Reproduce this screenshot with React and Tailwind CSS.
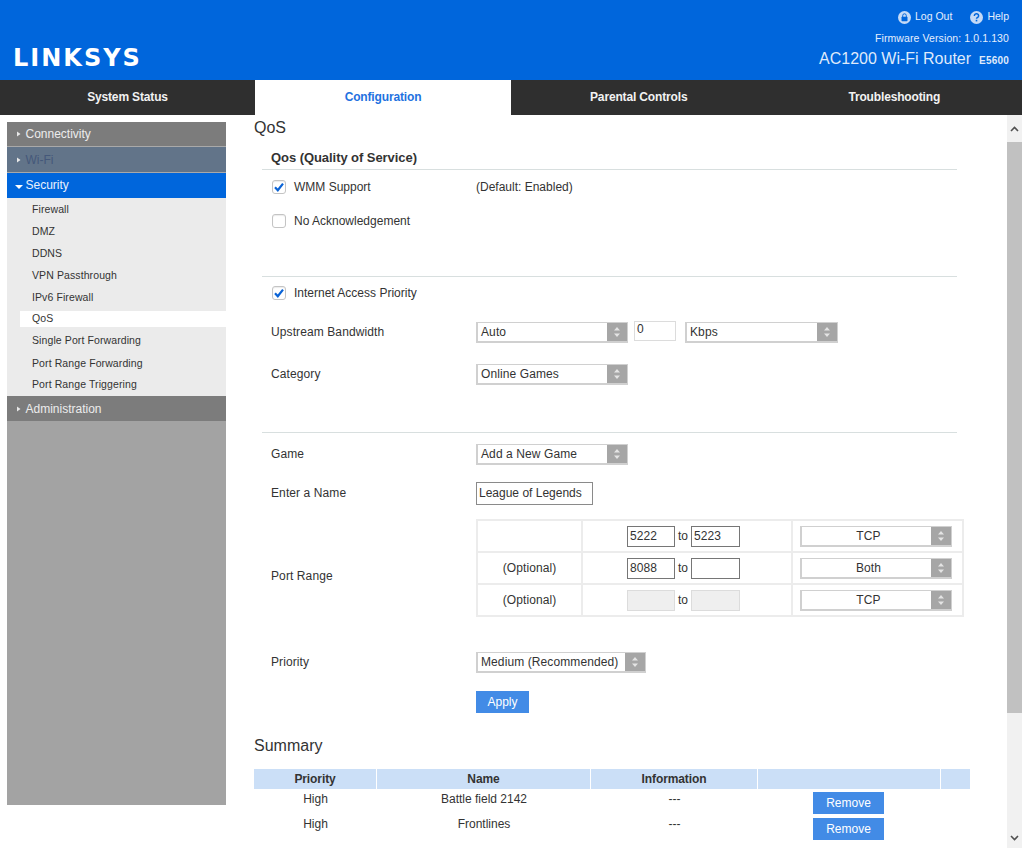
import React from "react";

const tabs = ["System Status", "Configuration", "Parental Controls", "Troubleshooting"];

const subItems = [
  { name: "Firewall", h: "h-[22px]" },
  { name: "DMZ", h: "h-[22px]" },
  { name: "DDNS", h: "h-[22px]" },
  { name: "VPN Passthrough", h: "h-[22px]" },
  { name: "IPv6 Firewall", h: "h-[22px]" },
  { name: "QoS", h: "h-[16px] mt-[2px] mb-[3px] bg-white" },
  { name: "Single Port Forwarding", h: "h-[22px]" },
  { name: "Port Range Forwarding", h: "h-[23px]" },
  { name: "Port Range Triggering", h: "h-[20px]" },
];

const Caret = ({ open }) =>
  open ? (
    <svg width="8" height="6" viewBox="0 0 8 6" className="mt-[3px]">
      <path d="M0 1h8L4 5z" fill="#fff" />
    </svg>
  ) : (
    <svg width="8" height="8" viewBox="0 0 8 8">
      <path d="M2 1.5l3.5 2.5L2 6.5z" fill="#e8e8e8" />
    </svg>
  );

const Check = ({ checked }) => (
  <div className="relative w-[14px] h-[14px] shrink-0 rounded-[3px] border border-[#c4c4c4] bg-white shadow-[inset_0_1px_1px_rgba(0,0,0,0.08)]">
    {checked && (
      <svg width="14" height="14" viewBox="0 0 14 14" className="absolute -left-px -top-px">
        <path d="M3 7.2l2.8 3L11 3.6" fill="none" stroke="#0a63d6" strokeWidth="2.2" />
      </svg>
    )}
  </div>
);

const Select = ({ value, w, center }) => (
  <div className={`flex h-[21px] border border-[#d0d0d0] border-l-2 border-b-2 bg-white ${w}`}>
    <div className={`flex-1 flex items-center text-[12px] tracking-[0.1px] text-[#333] ${center ? "justify-center pl-1" : "pl-[3px]"}`}>
      {value}
    </div>
    <div className="flex w-[20px] items-center justify-center bg-[#a6a6a6]">
      <svg width="8" height="12" viewBox="0 0 8 12">
        <path d="M4 1l3 3.5H1zM4 11L1 7.5h6z" fill="#e4e4e4" />
      </svg>
    </div>
  </div>
);

const Row = ({ h, label, children }) => (
  <div className={`flex items-center pl-[9px] ${h}`}>
    <div className="w-[205px] shrink-0 text-[12px] tracking-[0.1px] text-[#333]">{label}</div>
    {children}
  </div>
);

const CheckRow = ({ h, label, checked, children }) => (
  <div className={`flex items-center pl-[10px] ${h}`}>
    <Check checked={checked} />
    <div className="w-[190px] shrink-0 pl-[8px] -mt-[1px] text-[12px] text-[#333]">{label}</div>
    {children}
  </div>
);

const PortInput = ({ value, disabled, w = "w-[48px]" }) => (
  <div
    className={`h-[21px] ${w} flex items-center pl-[2px] text-[12px] tracking-[0.1px] text-[#333] border ${
      disabled ? "bg-[#efefef] border-[#dcdcdc]" : "bg-white border-[#767676]"
    }`}
  >
    {value}
  </div>
);

const portRows = [
  { opt: "", a: "5222", b: "5223", proto: "TCP" },
  { opt: "(Optional)", a: "8088", b: "", proto: "Both" },
  { opt: "(Optional)", a: "", b: "", proto: "TCP", disabled: true },
];

const PortTable = () => (
  <div className="w-[488px] shrink-0 border-t-2 border-l-2 border-[#ececec]">
    {portRows.map((r, i) => (
      <div key={i} className="flex h-[32px] border-b-2 border-[#ececec]">
        <div className="w-[105px] flex items-center justify-center text-[12px] tracking-[0.1px] text-[#333] border-r-2 border-[#ececec]">
          {r.opt}
        </div>
        <div className="w-[210px] flex items-center pl-[44px] text-[12px] text-[#333] border-r-2 border-[#ececec]">
          <PortInput value={r.a} disabled={r.disabled} />
          <span className="w-[16px] text-center">to</span>
          <PortInput value={r.b} disabled={r.disabled} w="w-[49px]" />
        </div>
        <div className="flex-1 flex items-center pl-[7px] border-r-2 border-[#ececec]">
          <Select value={r.proto} w="w-[152px]" center />
        </div>
      </div>
    ))}
  </div>
);

const summary = [
  { priority: "High", name: "Battle field 2142", text: "-mt-[2px]" },
  { priority: "High", name: "Frontlines", text: "-mt-[3px]" },
];

export default function App() {
  return (
    <div className="h-[848px] w-[1024px] overflow-hidden bg-white font-['Liberation_Sans',Arial,sans-serif]">
      <div className="w-[1022px]">
        {/* header */}
        <header className="relative h-[80px] bg-[#0066dc] text-white">
          <div className="absolute left-[13px] top-[43px] text-[24px] leading-[30px] font-bold tracking-[2px] font-['DejaVu_Sans',sans-serif]">
            LINKSYS
          </div>
          <div className="flex flex-col items-end pr-[13px] pt-[10px]">
            <div className="flex items-center h-[14px] text-[10.5px] text-[#e4eefc]">
              <svg width="13" height="13" viewBox="0 0 13 13">
                <circle cx="6.5" cy="6.5" r="6.5" fill="#c5daf6" />
                <rect x="3.5" y="5.8" width="6" height="4.4" rx="0.6" fill="#0066dc" />
                <path d="M4.7 6V4.6a1.8 1.8 0 013.6 0V6" fill="none" stroke="#0066dc" strokeWidth="1" />
              </svg>
              <span className="ml-[4px]">Log Out</span>
              <svg width="13" height="13" viewBox="0 0 13 13" className="ml-[18px]">
                <circle cx="6.5" cy="6.5" r="6.5" fill="#c5daf6" />
                <path d="M4.4 5a2.1 2.1 0 114 .6c-.5.8-1.9 1-1.9 2.2" fill="none" stroke="#0066dc" strokeWidth="1.5" />
                <rect x="5.7" y="8.8" width="1.6" height="1.6" fill="#0066dc" />
              </svg>
              <span className="ml-[4px]">Help</span>
            </div>
            <div className="mt-[7px] h-[14px] leading-[14px] text-[10.5px] tracking-[0.1px] text-[#e4eefc]">
              Firmware Version: 1.0.1.130
            </div>
            <div className="mt-[4px] flex items-baseline text-[#dfeafb]">
              <span className="text-[16px] leading-[20px]">AC1200 Wi-Fi Router</span>
              <span className="ml-[8px] text-[10px] font-bold tracking-[0.2px]">E5600</span>
            </div>
          </div>
        </header>

        {/* tabs */}
        <nav className="flex h-[35px] bg-[#2f2f2f]">
          {tabs.map((t, i) => (
            <div
              key={t}
              className={`${i === 0 ? "w-[255px]" : i === 1 ? "w-[256px]" : "w-[255.5px]"} flex items-center justify-center pb-[1px] text-[12px] font-bold tracking-[-0.15px] ${
                t === "Configuration" ? "bg-white text-[#1f72e0]" : "text-[#f2f2f2]"
              }`}
            >
              {t}
            </div>
          ))}
        </nav>

        <div className="flex">
          {/* sidebar */}
          <aside className="ml-[7px] mt-[7px] w-[219px] h-[683px] shrink-0 bg-[#a3a3a3]">
            <div className="flex items-center h-[25px] bg-[#7c7c7c] border-b border-[#a9a9a9] pl-[8px] text-[12px] text-[#ececec]">
              <Caret />
              <span className="ml-[2.5px]">Connectivity</span>
            </div>
            <div className="flex items-center h-[26px] bg-[#627489] border-b border-[#a9a9a9] pl-[8px] text-[12px] text-[#45587a]">
              <Caret />
              <span className="ml-[2.5px]">Wi-Fi</span>
            </div>
            <div className="flex items-center h-[25px] bg-[#0066dc] pl-[8px] pb-[1px] text-[12px] text-[#e8f0fc]">
              <Caret open />
              <span className="ml-[2.5px]">Security</span>
            </div>
            <div className="bg-[#ebebeb] h-[198px] pl-[13px] pt-[1px]">
              {subItems.map((s) => (
                <div
                  key={s.name}
                  className={`${s.h} flex items-center pl-[12px] text-[10.5px] tracking-[0.1px] text-[#333]`}
                >
                  {s.name}
                </div>
              ))}
            </div>
            <div className="flex items-center h-[25px] bg-[#7c7c7c] pl-[8px] text-[12px] text-[#ececec]">
              <Caret />
              <span className="ml-[2.5px]">Administration</span>
            </div>
          </aside>

          {/* main */}
          <main className="ml-[28px] w-[751px] shrink-0">
            <h1 className="h-[26px] flex items-center text-[16px] font-normal text-[#333]">QoS</h1>
            <div className="ml-[8px] w-[695px]">
              <div className="h-[29px] pt-[5px] pl-[9px] flex items-center border-b border-[#d8dfdf] text-[13px] font-bold tracking-[-0.06px] text-[#333]">
                Qos (Quality of Service)
              </div>
              <CheckRow h="h-[34px]" label="WMM Support" checked>
                <span className="text-[12px] text-[#333]">(Default: Enabled)</span>
              </CheckRow>
              <CheckRow h="h-[34px]" label="No Acknowledgement" />
              <div className="h-[39px] border-b border-[#d8dfdf]" />
              <CheckRow h="h-[32px]" label="Internet Access Priority" checked />
              <Row h="h-[46px]" label="Upstream Bandwidth">
                <Select value="Auto" w="w-[152px]" />
                <div className="ml-[6px] -mt-[2px] h-[20px] w-[42px] border border-[#dcdcdc] pl-[2px] text-[12px] leading-[15px] text-[#333]">0</div>
                <div className="ml-[9px]">
                  <Select value="Kbps" w="w-[153px]" />
                </div>
              </Row>
              <Row h="h-[38px]" label="Category">
                <Select value="Online Games" w="w-[152px]" />
              </Row>
              <div className="h-[40px] border-b border-[#d8dfdf]" />
              <Row h="h-[42px]" label="Game">
                <Select value="Add a New Game" w="w-[152px]" />
              </Row>
              <Row h="h-[36px]" label="Enter a Name">
                <div className="h-[23px] w-[117px] flex items-center pl-[2px] border border-[#8a8a8a] text-[12px] text-[#333]">
                  League of Legends
                </div>
              </Row>
              <div className="mt-[8px] flex items-start pl-[9px]">
                <div className="w-[205px] shrink-0 h-[98px] pt-[48px] text-[12px] tracking-[0.1px] text-[#333]">Port Range</div>
                <PortTable />
              </div>
              <div className="mt-[23px]">
                <Row h="h-[44px]" label="Priority">
                  <Select value="Medium (Recommended)" w="w-[170px]" />
                </Row>
              </div>
              <button className="ml-[214px] mt-[7px] h-[22px] w-[53px] block bg-[#428be6] text-[12px] text-white">Apply</button>
            </div>
            <h2 className="mt-[20px] h-[26px] flex items-center text-[16px] font-normal text-[#333]">Summary</h2>
            <div className="mt-[10px] w-[716px] text-[12px] text-[#333]">
              <div className="flex h-[20px] items-center bg-[#cbdff7] font-bold tracking-[-0.1px]">
                <div className="w-[123px] h-full flex items-center justify-center border-r border-white">Priority</div>
                <div className="w-[214px] h-full flex items-center justify-center border-r border-white">Name</div>
                <div className="w-[167px] h-full flex items-center justify-center border-r border-white">Information</div>
                <div className="w-[183px] h-full border-r border-white" />
              </div>
              {summary.map((r) => (
                <div key={r.name} className="flex h-[26px] items-start pt-[3px]">
                  <div className={`w-[123px] text-center ${r.text}`}>{r.priority}</div>
                  <div className={`w-[214px] text-center ${r.text}`}>{r.name}</div>
                  <div className={`w-[167px] text-center ${r.text}`}>---</div>
                  <div className="w-[181px] flex justify-center">
                    <span className="flex h-[22px] w-[71px] items-center justify-center bg-[#428be6] text-white">Remove</span>
                  </div>
                </div>
              ))}
            </div>
          </main>

          {/* scrollbar */}
          <div className="ml-[2px] w-[15px] h-[733px] bg-[#f1f1f1] flex flex-col items-center">
            <div className="h-[27px] flex items-center">
              <svg width="9" height="6" viewBox="0 0 9 6">
                <path d="M1 5l3.5-3.5L8 5" fill="none" stroke="#505050" strokeWidth="1.6" />
              </svg>
            </div>
            <div className="h-[571px] w-full bg-[#c1c1c1]" />
            <div className="flex-1 w-full flex items-end justify-center pb-[7px]">
              <svg width="9" height="6" viewBox="0 0 9 6">
                <path d="M1 1l3.5 3.5L8 1" fill="none" stroke="#505050" strokeWidth="1.6" />
              </svg>
            </div>
          </div>
        </div>
      </div>
    </div>
  );
}
